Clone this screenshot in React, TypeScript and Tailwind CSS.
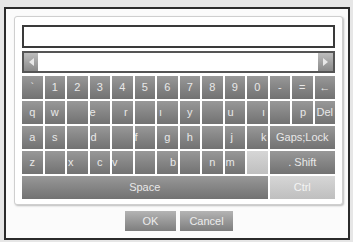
import React from 'react'

type Key = { label: string; span?: number; align?: 'left' | 'center'; pad?: number; light?: boolean }

const rows: Key[][] = [
  [
    { label: '`' }, { label: '1' }, { label: '2' }, { label: '3' }, { label: '4' }, { label: '5' }, { label: '6' },
    { label: '7' }, { label: '8' }, { label: '9' }, { label: '0' }, { label: '-' }, { label: '=' }, { label: '←' },
  ],
  [
    { label: 'q' }, { label: 'w' }, { label: '' }, { label: 'e', align: 'left', pad: 0 }, { label: 'r', align: 'left', pad: 12 },
    { label: '' }, { label: 'ı', align: 'left', pad: 2 }, { label: 'y' }, { label: '' }, { label: 'u', align: 'left', pad: 3 },
    { label: 'ı', align: 'left', pad: 15 }, { label: '' }, { label: 'p', align: 'left', pad: 8 }, { label: 'Del' },
  ],
  [
    { label: 'a' }, { label: 's' }, { label: '' }, { label: 'd', align: 'left', pad: 1 }, { label: '' },
    { label: 'f', align: 'left', pad: 0 }, { label: 'g' }, { label: 'h' }, { label: '' }, { label: 'j', align: 'left', pad: 6 },
    { label: 'k', align: 'left', pad: 14 }, { label: 'Gaps;Lock', span: 3 },
  ],
  [
    { label: 'z' }, { label: '' }, { label: 'x', align: 'left', pad: 1 }, { label: 'c' }, { label: 'v', align: 'left', pad: 0 },
    { label: '' }, { label: 'b', align: 'left', pad: 13 }, { label: '' }, { label: 'n' }, { label: 'm', align: 'left', pad: 1 },
    { label: '', light: true }, { label: '. Shift', span: 3 },
  ],
  [
    { label: 'Space', span: 11 },
    { label: 'Ctrl', span: 3, light: true },
  ],
]

const spanClass: Record<number, string> = {
  1: 'col-span-1',
  3: 'col-span-3',
  11: 'col-span-11',
}

function KeyCap({ k }: { k: Key }) {
  const span = k.span ?? 1
  const base = k.light
    ? 'bg-gradient-to-b from-[#d6d6d6] to-[#bfbfbf] text-[#f4f4f4]'
    : 'bg-gradient-to-b from-[#989898] to-[#727272] text-[#e8e8e8]'
  return (
    <div
      className={`${spanClass[span]} ${base} h-[23px] flex items-center text-[11px] leading-none ${
        k.align === 'left' ? 'justify-start' : 'justify-center'
      }`}
      style={k.align === 'left' ? { paddingLeft: k.pad ?? 0 } : undefined}
    >
      {k.label}
    </div>
  )
}

export default function App() {
  return (
    <div className="w-[353px] h-[242px] bg-[#e6e6e6] pl-[4px] pt-[7px] font-['Liberation_Sans',Arial,sans-serif] overflow-hidden">
      <div className="w-[346px] h-[233px] border-2 border-[#2b2b2b] bg-[#fbfbfb] flex flex-col">
        {/* Keyboard panel */}
        <div className="ml-[8px] mt-[7px] w-[329px] h-[189px] rounded-[3px] border border-[#cfcfcf] shadow-[1px_1px_2px_rgba(0,0,0,0.25)] bg-white pl-[7px] pt-[8px] flex flex-col">
          <div className="w-[313px] h-[23px] border-2 border-[#3a3a3a] bg-white" />
          <div className="w-[313px] h-[22px] mt-[3px] border-2 border-[#555] bg-white flex">
            <div className="w-[14px] h-full bg-gradient-to-b from-[#bdbdbd] to-[#8a8a8a] flex items-center justify-center">
              <span className="w-0 h-0 border-y-[4px] border-y-transparent border-r-[5px] border-r-[#e8e8e8]" />
            </div>
            <div className="flex-1" />
            <div className="w-[15px] h-full bg-gradient-to-b from-[#bdbdbd] to-[#8a8a8a] flex items-center justify-center">
              <span className="w-0 h-0 border-y-[4px] border-y-transparent border-l-[5px] border-l-[#e8e8e8]" />
            </div>
          </div>
          <div className="w-[313px] mt-[3px] grid grid-cols-14 gap-[2px]">
            {rows.map((row, ri) => (
              <React.Fragment key={ri}>
                {row.map((k, ki) => (
                  <KeyCap key={ki} k={k} />
                ))}
              </React.Fragment>
            ))}
          </div>
        </div>

        {/* Buttons */}
        <div className="mt-[6px] flex justify-center gap-[4px] pl-[4px]">
          <button className="w-[51px] h-[20px] bg-gradient-to-b from-[#b4b4b4] to-[#7e7e7e] text-[#ececec] text-[11px] leading-none">
            OK
          </button>
          <button className="w-[53px] h-[20px] bg-gradient-to-b from-[#b4b4b4] to-[#7e7e7e] text-[#ececec] text-[11px] leading-none">
            Cancel
          </button>
        </div>
      </div>
    </div>
  )
}
